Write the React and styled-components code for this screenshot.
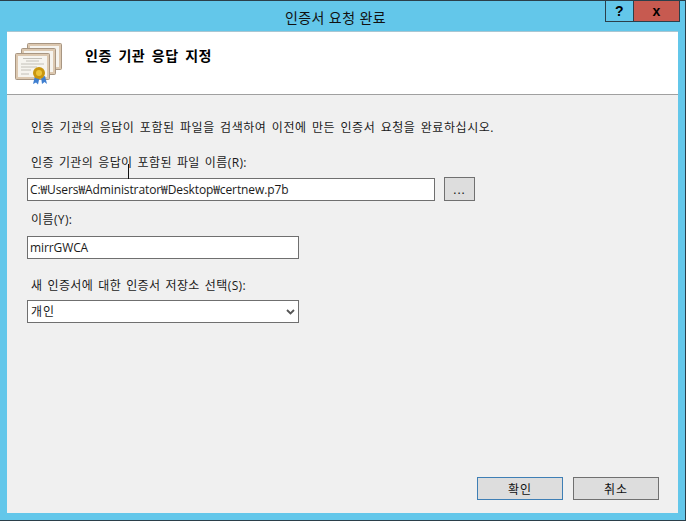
import React from "react";
import styled, { createGlobalStyle } from "styled-components";

const GlobalStyle = createGlobalStyle`
  html, body {
    margin: 0;
    padding: 0;
    background: #63c7ea;
  }
  * {
    box-sizing: border-box;
  }
`;

const fontStack = `"Open Sans", "Noto Sans CJK KR", sans-serif`;

const Win = styled.div`
  position: relative;
  width: 686px;
  height: 521px;
  display: flex;
  flex-direction: column;
  background: #63c7ea;
  border-top: 1px solid #2b3f4a;
  border-right: 1px solid #2b3f4a;
  border-bottom: 1px solid #2b3f4a;
  font-family: ${fontStack};
  font-size: 12px;
  color: #1a1a1a;
`;

const TitleBar = styled.div`
  height: 30px;
  flex: none;
  position: relative;
  display: flex;
  justify-content: center;
  align-items: center;
  font-size: 14px;
  letter-spacing: 0.4px;
  color: #111;
  padding: 1px 14px 0 0;
`;

const Caption = styled.div`
  position: absolute;
  top: -1px;
  right: 5px;
  height: 22px;
  display: flex;
  border: 1px solid #2b3f4a;
`;

const CaptionBtn = styled.div`
  width: ${(p) => p.$w}px;
  display: flex;
  align-items: center;
  justify-content: center;
  background: ${(p) => (p.$close ? "#c75a50" : "transparent")};
  border-left: ${(p) => (p.$close ? "1px solid #2b3f4a" : "none")};
  font: bold 14px "Liberation Sans", sans-serif;
  color: #000;
`;

const Client = styled.div`
  flex: 1;
  margin: 0 7px 7px 7px;
  display: flex;
  flex-direction: column;
  background: #f0f0f0;
  border-top: 1px solid #a9c6d2;
  min-height: 0;
`;

const Header = styled.div`
  height: 63px;
  flex: none;
  display: flex;
  background: #fff;
  border-bottom: 1px solid #a0a0a0;
  padding: 11px 0 0 8px;
`;

const HeaderTitle = styled.h1`
  margin: 4px 0 0 22px;
  font-size: 14px;
  line-height: 18px;
  font-weight: 700;
  letter-spacing: 0.5px;
  word-spacing: 2.5px;
  color: #000;
`;

const Body = styled.div`
  flex: 1;
  display: flex;
  flex-direction: column;
  padding: 23px 19px 13px 20px;
  min-height: 0;
`;

const Intro = styled.p`
  margin: 0 0 16px 4px;
  line-height: 20px;
  letter-spacing: 0.55px;
  word-spacing: 1.7px;
`;

const Label = styled.label`
  display: block;
  margin-left: 4px;
  line-height: 18px;
  letter-spacing: 0.4px;
  word-spacing: 1.5px;
  margin-bottom: ${(p) => p.$gap}px;
`;

const Row = styled.div`
  display: flex;
  align-items: flex-end;
  gap: 9px;
  margin-bottom: ${(p) => p.$gap}px;
`;

const TextBox = styled.input`
  width: ${(p) => p.$w}px;
  height: 23px;
  padding: 0 2px 1px 2px;
  border: 1px solid #6f6f6f;
  border-radius: 0;
  background: #fff;
  font-family: ${fontStack};
  font-size: 12px;
  letter-spacing: -0.1px;
  color: #1a1a1a;
  outline: none;
`;

const SelectWrap = styled.div`
  position: relative;
  width: 272px;
  height: 23px;
`;

const SelectBox = styled.select`
  appearance: none;
  width: 100%;
  height: 100%;
  padding: 0 2px 1px 3px;
  border: 1px solid #6f6f6f;
  border-radius: 0;
  background: #fff;
  font-family: ${fontStack};
  font-size: 12px;
  letter-spacing: 1px;
  color: #1a1a1a;
  outline: none;
`;

const Chevron = styled.svg`
  position: absolute;
  top: 9px;
  right: 4px;
  pointer-events: none;
`;

const Btn = styled.button`
  width: ${(p) => p.$w}px;
  height: ${(p) => p.$h}px;
  padding: 0;
  border: 1px solid ${(p) => (p.$primary ? "#3f7fb5" : "#707070")};
  border-radius: 0;
  background: #dddddd;
  font-family: ${fontStack};
  font-size: 12px;
  letter-spacing: 1px;
  color: #111;
`;

const Footer = styled.div`
  margin-top: auto;
  display: flex;
  justify-content: flex-end;
  gap: 10px;
`;

const Cursor = styled.div`
  position: absolute;
  left: 128px;
  top: 163px;
  width: 1px;
  height: 15px;
  background: #111;
`;

function Sheet({ x, y }) {
  return (
    <g transform={`translate(${x} ${y})`}>
      <rect x="0.5" y="0.5" width="34" height="26" rx="1" fill="#dcc8b0" stroke="#a89682" />
      <rect x="3" y="3" width="29" height="21" fill="#f6f4ef" />
    </g>
  );
}

function CertIcon() {
  return (
    <svg width="48" height="42" viewBox="0 0 48 42" style={{ flex: "none" }}>
      <Sheet x={12} y={0} />
      <Sheet x={6} y={5} />
      <Sheet x={0} y={10} />
      <path d="M8 15.5h19M11 18h13M6 21h23M6 24h16M6 27h10M6 31h8" stroke="#bdbab2" strokeWidth="0.9" />
      <path d="M20 33l-2 8 3-1.5 2 2 1.5-7zM26 34l1 7 2.5-2 2.5 2-2-8z" fill="#3f7fd0" />
      <circle cx="24" cy="30" r="6" fill="#c9960f" />
      <circle cx="24" cy="30" r="3" fill="#eec43a" />
    </svg>
  );
}

export default function App() {
  return (
    <>
      <GlobalStyle />
      <Win>
        <TitleBar>
          인증서 요청 완료
          <Caption>
            <CaptionBtn $w={27}>?</CaptionBtn>
            <CaptionBtn $w={46} $close>x</CaptionBtn>
          </Caption>
        </TitleBar>
        <Client>
          <Header>
            <CertIcon />
            <HeaderTitle>인증 기관 응답 지정</HeaderTitle>
          </Header>
          <Body>
            <Intro>인증 기관의 응답이 포함된 파일을 검색하여 이전에 만든 인증서 요청을 완료하십시오.</Intro>
            <Label $gap={5}>인증 기관의 응답이 포함된 파일 이름(R):</Label>
            <Row $gap={10}>
              <TextBox $w={408} readOnly value="C:₩Users₩Administrator₩Desktop₩certnew.p7b" />
              <Btn $w={31} $h={24}>...</Btn>
            </Row>
            <Label $gap={7}>이름(Y):</Label>
            <Row $gap={18}>
              <TextBox $w={272} readOnly value="mirrGWCA" />
            </Row>
            <Label $gap={5}>새 인증서에 대한 인증서 저장소 선택(S):</Label>
            <SelectWrap>
              <SelectBox defaultValue="개인">
                <option>개인</option>
              </SelectBox>
              <Chevron width="9" height="6" viewBox="0 0 9 6">
                <path d="M1 1l3.5 3.5L8 1" fill="none" stroke="#555" strokeWidth="1.8" />
              </Chevron>
            </SelectWrap>
            <Footer>
              <Btn $w={86} $h={23} $primary>확인</Btn>
              <Btn $w={86} $h={23}>취소</Btn>
            </Footer>
          </Body>
        </Client>
        <Cursor />
      </Win>
    </>
  );
}
